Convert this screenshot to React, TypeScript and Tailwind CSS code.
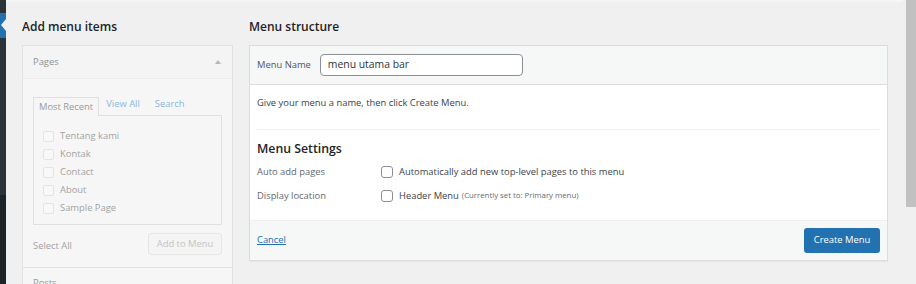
import React from "react";

const font = { fontFamily: '"Open Sans", "Noto Sans", Arial, sans-serif' };

function FadedCheck() {
  return <span className="inline-block shrink-0 w-[11px] h-[11px] rounded-[2px] border border-[#e4e4e4] bg-[#f8f8f8]" />;
}

function Check() {
  return <span className="inline-block shrink-0 w-[12px] h-[12px] rounded-[3px] border border-[#8c8f94] bg-white" />;
}

export default function App() {
  const pages = ["Tentang kami", "Kontak", "Contact", "About", "Sample Page"];
  return (
    <div className="w-[916px] h-[284px] overflow-hidden flex bg-[#f0f0f1] text-[#1d2327]" style={font}>
      {/* admin sidebar sliver */}
      <div className="w-[6px] h-full flex flex-col shrink-0">
        <div className="h-[13px] shrink-0 bg-[#2c3338]" />
        <div className="h-[25px] shrink-0 bg-[#2271b1] relative">
          <svg className="absolute right-0 top-[6px]" width="5" height="12" viewBox="0 0 5 12">
            <polygon points="5,0 0,6 5,12" fill="#f0f0f1" />
          </svg>
        </div>
        <div className="h-[157px] shrink-0 bg-[#2c3338]" />
        <div className="flex-1 bg-[#1d2327]" />
      </div>

      {/* content */}
      <div className="flex-1 flex items-start pl-[16px] pt-[15px] gap-[16px] border-t-2 border-[#f6f6f6] overflow-hidden">
        {/* left column */}
        <div className="w-[211px] shrink-0 flex flex-col">
          <h2 className="shrink-0 text-[12px] leading-[20px] font-semibold text-[#1d2327] h-[28px]">Add menu items</h2>
          <div className="shrink-0 border border-[#e2e2e2] bg-[#f6f6f6] flex flex-col">
            <div className="shrink-0 h-[33px] flex items-center justify-between px-[10px] bg-[#f4f4f4] border-b border-[#ececec]">
              <span className="text-[9.4px] text-[#8f9296]">Pages</span>
              <svg width="8" height="6" viewBox="0 0 8 6">
                <polygon points="4,1 7,5 1,5" fill="#b5b7ba" />
              </svg>
            </div>
            <div className="px-[10px] pt-[17px]">
              <div className="flex items-end text-[9.4px] h-[19px]">
                <div className="h-[19px] px-[5px] flex items-center border border-b-0 border-[#e0e0e0] bg-[#f6f6f6] text-[#9a9a9a] relative top-[1px]">Most Recent</div>
                <span className="ml-[7px] mb-[4px] text-[#8ab6dc]">View All</span>
                <span className="ml-[15px] mb-[4px] text-[#8ab6dc]">Search</span>
              </div>
              <div className="h-[110px] border border-[#e0e0e0] bg-[#f6f6f6] pt-[11px] pl-[9px] flex flex-col">
                {pages.map((p) => (
                  <div key={p} className="h-[18px] shrink-0 flex items-center gap-[6px]">
                    <FadedCheck />
                    <span className="text-[9.4px] text-[#a3a3a3]">{p}</span>
                  </div>
                ))}
              </div>
              <div className="flex items-center justify-between mt-[8px] h-[22px]">
                <span className="text-[9.4px] text-[#a3a3a3] mt-[4px]">Select All</span>
                <div className="h-[22px] w-[74px] rounded-[3px] border border-[#e6e6e6] bg-[#f4f4f4] text-[9.4px] text-[#c4c4c4] flex items-center justify-center">Add to Menu</div>
              </div>
            </div>
            <div className="mt-[12px] border-t border-[#e2e2e2] h-[30px] px-[10px] pt-[10px] text-[9.4px] text-[#9a9a9a] leading-[10px]">Posts</div>
          </div>
        </div>

        {/* right column */}
        <div className="w-[639px] shrink-0 flex flex-col">
          <h2 className="shrink-0 text-[12px] leading-[20px] font-semibold text-[#1d2327] h-[28px]">Menu structure</h2>
          <div className="shrink-0 border border-[#dcdcde] bg-white flex flex-col shadow-[0_1px_1px_rgba(0,0,0,0.04)]">
            <div className="h-[39px] bg-[#f6f7f7] border-b border-[#dcdcde] flex items-center px-[7px] gap-[9px]">
              <span className="text-[9.4px] text-[#50575e]">Menu Name</span>
              <div className="w-[203px] h-[22px] rounded-[4px] border border-[#8c8f94] bg-white flex items-center px-[7px] text-[10.4px] text-[#2c3338]">menu utama bar</div>
            </div>
            <div className="h-[135px] px-[7px] flex flex-col">
              <p className="text-[9.4px] text-[#3c434a] mt-[10px] leading-[16px]">Give your menu a name, then click Create Menu.</p>
              <div className="mt-[18px] border-t border-[#f0f0f1] mr-[1px]" />
              <h3 className="text-[12.3px] font-semibold leading-[18px] mt-[10px] text-[#1d2327]">Menu Settings</h3>
              <div className="flex items-center h-[24px] mt-[2px]">
                <span className="w-[124px] text-[9.4px] text-[#646970]">Auto add pages</span>
                <Check />
                <span className="ml-[6px] text-[9.4px] text-[#3c434a]">Automatically add new top-level pages to this menu</span>
              </div>
              <div className="flex items-center h-[24px]">
                <span className="w-[124px] text-[9.4px] text-[#646970]">Display location</span>
                <Check />
                <span className="ml-[6px] text-[9.4px] text-[#3c434a]">Header Menu</span>
                <span className="ml-[3px] text-[7.8px] text-[#646970]">(Currently set to: Primary menu)</span>
              </div>
            </div>
            <div className="h-[40px] bg-[#f6f7f7] border-t border-[#f0f0f1] flex items-center justify-between px-[7px]">
              <span className="text-[9.4px] text-[#2271b1] underline">Cancel</span>
              <div className="h-[25px] w-[76px] rounded-[3px] bg-[#2271b1] text-white text-[9.4px] flex items-center justify-center">Create Menu</div>
            </div>
          </div>
        </div>

        <div className="flex-1" />
      </div>

      {/* scrollbar */}
      <div className="w-[13px] h-full shrink-0 bg-[#f0f0f0] flex justify-center pl-[2px]">
        <div className="w-[10px] h-[207px] bg-[#c1c1c1]" />
      </div>
    </div>
  );
}
